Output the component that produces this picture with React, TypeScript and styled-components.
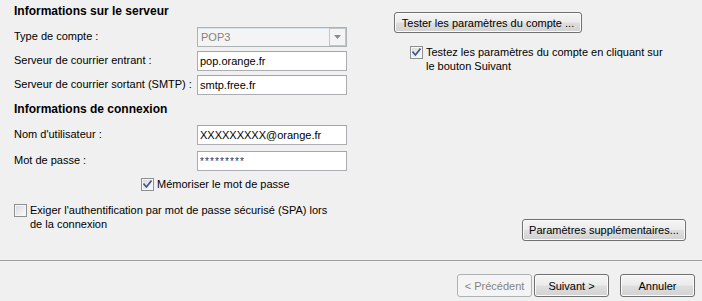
import React from "react";
import styled, { createGlobalStyle } from "styled-components";

const Global = createGlobalStyle`
  html, body { margin: 0; padding: 0; background: #f0f0f0; }
  body {
    font-family: "Liberation Sans", Arial, sans-serif;
    font-size: 11px;
    color: #000;
  }
  * { box-sizing: border-box; }
`;

const Dialog = styled.div`
  width: 702px;
  height: 301px;
  display: flex;
  flex-direction: column;
  background: #f0f0f0;
  overflow: hidden;
`;

const Body = styled.div`
  height: 260px;
  flex: none;
  display: grid;
  grid-template-columns: 394px 1fr;
`;

const LeftCol = styled.div`
  padding: 4px 0 0 14px;
  display: flex;
  flex-direction: column;
`;

const RightCol = styled.div`
  padding: 12px 16px 19px 0;
  display: flex;
  flex-direction: column;
  align-items: flex-start;
`;

const SectionTitle = styled.div<{ $top?: number }>`
  font-weight: bold;
  font-size: 12px;
  line-height: 14px;
  margin-top: ${(p) => p.$top ?? 0}px;
  margin-bottom: 9px;
`;

const FieldRow = styled.div<{ $gap?: number }>`
  display: flex;
  align-items: center;
  height: 20px;
  margin-bottom: ${(p) => p.$gap ?? 4}px;
`;

const Label = styled.span`
  width: 183px;
  flex: none;
  line-height: 14px;
  margin-top: -2px;
`;

const TextInput = styled.input<{ $secret?: boolean }>`
  width: 150px;
  height: 20px;
  border: 1px solid #abadb3;
  border-top-color: #a3a6ad;
  background: #fff;
  font-family: "Liberation Sans", Arial, sans-serif;
  font-size: ${(p) => (p.$secret ? "10px" : "11px")};
  letter-spacing: ${(p) => (p.$secret ? "1.1px" : "0")};
  color: ${(p) => (p.$secret ? "#1f3457" : "#000")};
  padding: 0 2px;
  margin: 0;
  outline: none;
`;

const Combo = styled.div`
  width: 150px;
  height: 20px;
  border: 1px solid #adb2b5;
  background: #f4f4f4;
  box-shadow: inset 0 1px 0 #d9e4f1;
  display: flex;
  align-items: center;
  justify-content: space-between;
  padding-left: 3px;
  color: #838383;
`;

const ComboButton = styled.span`
  width: 17px;
  height: 18px;
  border: 1px solid #c3c6c9;
  background: #f4f4f4;
  display: flex;
  align-items: center;
  justify-content: center;
`;

const CheckRow = styled.div<{ $indent?: number; $top?: number }>`
  display: flex;
  align-items: flex-start;
  gap: 3px;
  margin-left: ${(p) => p.$indent ?? 0}px;
  margin-top: ${(p) => p.$top ?? 0}px;
  line-height: 14px;
`;

const Box = styled.span`
  width: 13px;
  height: 13px;
  flex: none;
  margin-top: 1px;
  border: 1px solid #8e8f8f;
  background: linear-gradient(135deg, #d6d8db 0%, #eceef0 60%, #fbfbfb 100%);
  box-shadow: inset 0 0 0 1px #f6f6f6;
  display: flex;
  align-items: center;
  justify-content: center;
`;

const CheckLabel = styled.span`
  line-height: 14px;
`;

const Button = styled.button<{ $w: number; $h?: number }>`
  width: ${(p) => p.$w}px;
  height: ${(p) => p.$h ?? 23}px;
  flex: none;
  font-family: "Liberation Sans", Arial, sans-serif;
  font-size: 11px;
  color: #000;
  border: 1px solid #707070;
  border-radius: 3px;
  background: linear-gradient(#f4f4f4 0%, #ececec 48%, #dedede 52%, #d2d2d2 100%);
  box-shadow: inset 0 0 0 1px #fbfbfb;
  padding: 0;
  margin: 0;
  &:disabled {
    border-color: #adb2b5;
    background: #f4f4f4;
    box-shadow: none;
    color: #838383;
  }
`;

const SpacerPush = styled.div`
  flex: 1;
`;

const EndButtonRow = styled.div`
  align-self: flex-end;
  display: flex;
`;

const Separator = styled.div`
  height: 1px;
  flex: none;
  background: #a0a0a0;
`;

const Footer = styled.div`
  flex: 1;
  display: flex;
  justify-content: flex-end;
  align-items: flex-start;
  padding: 13px 7px 0 0;
  gap: 2px;
`;

const FooterGap = styled.span`
  width: 7px;
`;

function Check({ checked }: { checked?: boolean }) {
  return (
    <Box>
      {checked && (
        <svg width="9" height="9" viewBox="0 0 9 9">
          <path
            d="M1 4.2 L3.4 7 L8 1.2"
            fill="none"
            stroke="#3f5585"
            strokeWidth="1.7"
            strokeLinecap="square"
          />
        </svg>
      )}
    </Box>
  );
}

export default function App() {
  return (
    <>
      <Global />
      <Dialog>
        <Body>
          <LeftCol>
            <SectionTitle>Informations sur le serveur</SectionTitle>
            <FieldRow>
              <Label>Type de compte :</Label>
              <Combo>
                <span>POP3</span>
                <ComboButton>
                  <svg width="7" height="4" viewBox="0 0 7 4">
                    <path d="M0 0 H7 L3.5 4 Z" fill="#8a8a8a" />
                  </svg>
                </ComboButton>
              </Combo>
            </FieldRow>
            <FieldRow>
              <Label>Serveur de courrier entrant :</Label>
              <TextInput readOnly value="pop.orange.fr" />
            </FieldRow>
            <FieldRow $gap={0}>
              <Label>Serveur de courrier sortant (SMTP) :</Label>
              <TextInput readOnly value="smtp.free.fr" />
            </FieldRow>
            <SectionTitle $top={7}>Informations de connexion</SectionTitle>
            <FieldRow $gap={6}>
              <Label>Nom d'utilisateur :</Label>
              <TextInput readOnly value="XXXXXXXXX@orange.fr" />
            </FieldRow>
            <FieldRow $gap={0}>
              <Label>Mot de passe :</Label>
              <TextInput readOnly $secret value="*********" />
            </FieldRow>
            <CheckRow $indent={127} $top={6}>
              <Check checked />
              <CheckLabel>Mémoriser le mot de passe</CheckLabel>
            </CheckRow>
            <CheckRow $top={12}>
              <Check />
              <CheckLabel>
                Exiger l'authentification par mot de passe sécurisé (SPA) lors
                <br />
                de la connexion
              </CheckLabel>
            </CheckRow>
          </LeftCol>
          <RightCol>
            <Button $w={188} $h={21}>Tester les paramètres du compte ...</Button>
            <CheckRow $indent={16} $top={12}>
              <Check checked />
              <CheckLabel>
                Testez les paramètres du compte en cliquant sur
                <br />
                le bouton Suivant
              </CheckLabel>
            </CheckRow>
            <SpacerPush />
            <EndButtonRow>
              <Button $w={164} $h={22}>Paramètres supplémentaires...</Button>
            </EndButtonRow>
          </RightCol>
        </Body>
        <Separator />
        <Footer>
          <Button $w={75} disabled>
            &lt; Précédent
          </Button>
          <Button $w={75}>Suivant &gt;</Button>
          <FooterGap />
          <Button $w={75}>Annuler</Button>
        </Footer>
      </Dialog>
    </>
  );
}
